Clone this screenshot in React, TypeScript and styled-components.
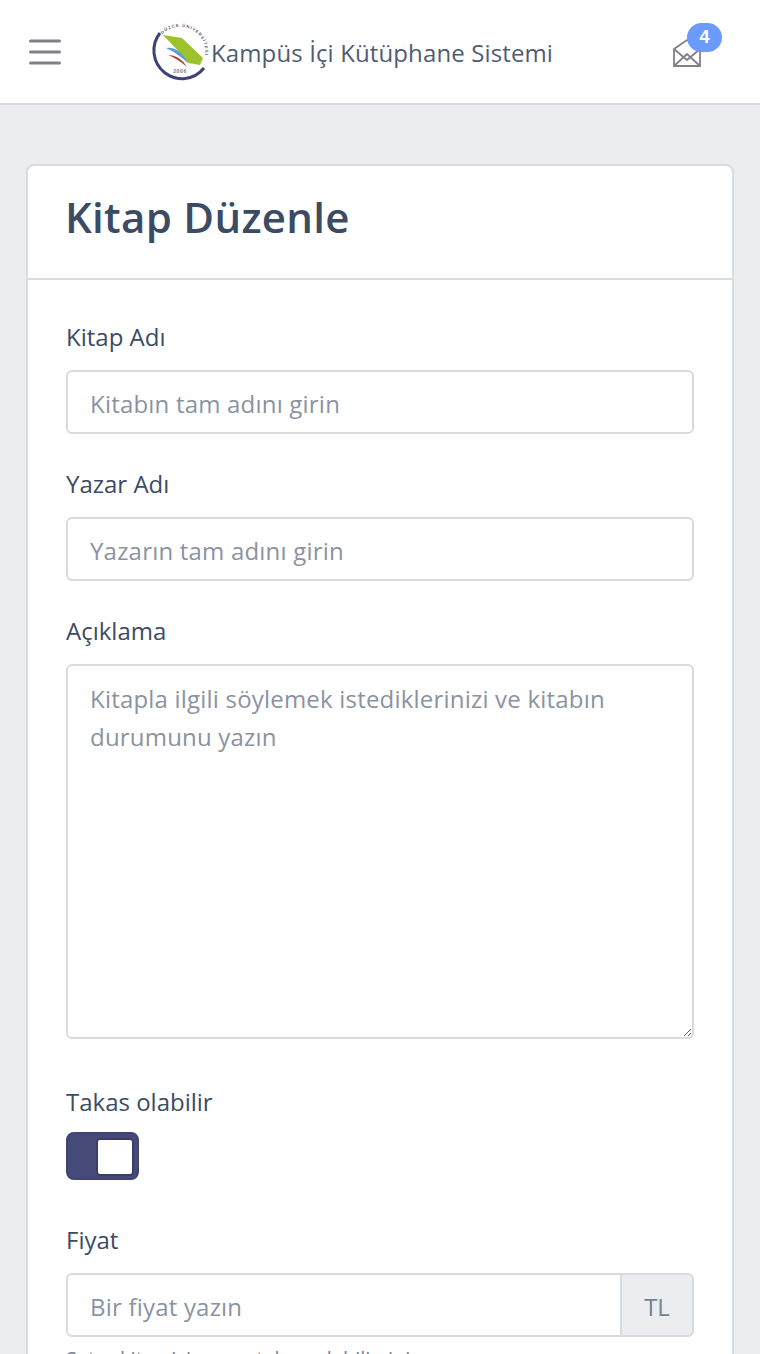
import { createGlobalStyle, styled } from "styled-components";

const GlobalStyle = createGlobalStyle`
    html, body{
        margin: 0;
        padding: 0;
        height: 1354px;
        overflow: hidden;
        background-color: #ebedef;
        font-family: 'Open Sans', 'Noto Sans', sans-serif;
        color: #3c4b64;
    }
    *{
        box-sizing: border-box;
    }
`

const Header = styled.header`
    height: 105px;
    background-color: #fff;
    border-bottom: 2px solid #d8dbe0;
    display: flex;
    align-items: center;
    padding: 0 58px 0 24px;
`

const MenuButton = styled.div`
    width: 42px;
    height: 42px;
    color: #80808a;
    display: flex;
    align-items: center;
    justify-content: center;
`

const Brand = styled.div`
    display: flex;
    align-items: center;
    margin-left: 84px;
    font-size: 24px;
    letter-spacing: 0.12px;
    color: #4f5d73;
`

const BrandName = styled.span`
    margin: 2px 0 0 1px;
`

const Mail = styled.div`
    position: relative;
    width: 30px;
    height: 30px;
    margin: 2px 0 0 auto;
    color: #80808a;
`

const Badge = styled.span`
    position: absolute;
    top: -15px;
    left: 15px;
    width: 35px;
    height: 29px;
    border-radius: 15px;
    background-color: #6b9bff;
    color: #fff;
    font-size: 18px;
    font-weight: 700;
    font-family: 'Liberation Sans', sans-serif;
    display: flex;
    align-items: center;
    justify-content: center;
`

const Main = styled.main`
    padding: 59px 26px 0;
`

const Card = styled.section`
    background-color: #fff;
    border: 2px solid #d8dbe0;
    border-radius: 8px;
`

const CardHeader = styled.div`
    height: 114px;
    padding: 0 37px;
    border-bottom: 2px solid #d8dbe0;
    display: flex;
    align-items: center;
`

const Title = styled.h1`
    margin: 0 0 10px;
    font-size: 42px;
    font-weight: 600;
    letter-spacing: 0.3px;
    line-height: 1.2;
    color: #3c4b64;
`

const CardBody = styled.div`
    padding: 40px 38px 0;
`

const Field = styled.div<{ $gap?: number }>`
    margin-bottom: ${({ $gap }) => $gap ?? 33}px;
`

const Label = styled.label`
    display: block;
    font-size: 24px;
    line-height: 34px;
    margin-bottom: 16px;
    color: #3c4b64;
`

const inputBase = `
    display: block;
    width: 100%;
    font-family: inherit;
    font-size: 24px;
    letter-spacing: 0.2px;
    color: #5c6873;
    background-color: #fff;
    border: 2px solid #d8dbe0;
    outline: none;
    &::placeholder{
        color: #8a93a2;
        opacity: 1;
    }
`

const Input = styled.input`
    ${inputBase}
    height: 64px;
    padding: 2px 22px 0;
    border-radius: 6px;
`

const TextArea = styled.textarea`
    ${inputBase}
    height: 375px;
    padding: 14px 22px;
    line-height: 38px;
    border-radius: 6px;
    resize: vertical;
`

const Toggle = styled.div`
    width: 73px;
    height: 48px;
    margin-top: -3px;
    background-color: #454a78;
    border: 2px solid #3f4470;
    border-radius: 8px;
    padding: 6px 0 0 30px;
`

const Knob = styled.div`
    width: 34px;
    height: 34px;
    background-color: #fff;
    border-radius: 2px;
    box-shadow: 0 0 0 2px #3a3e68;
`

const InputGroup = styled.div`
    display: flex;
    height: 64px;
`

const PriceInput = styled(Input)`
    flex: 1;
    border-radius: 6px 0 0 6px;
`

const Addon = styled.div`
    width: 74px;
    margin-left: -2px;
    padding-top: 2px;
    background-color: #ebedef;
    border: 2px solid #d8dbe0;
    border-radius: 0 6px 6px 0;
    font-size: 24px;
    color: #768192;
    display: flex;
    align-items: center;
    justify-content: center;
`

const Hint = styled.small`
    display: block;
    margin-top: 8px;
    font-size: 20px;
    color: #768192;
`

const HamburgerIcon = () => (
    <svg width="32" height="26" viewBox="0 0 32 26" fill="none" stroke="currentColor" strokeWidth="3" strokeLinecap="round">
        <path d="M1.5 2 H30.5 M1.5 13 H30.5 M1.5 24 H30.5" />
    </svg>
);

const Logo = () => (
    <svg width="60" height="60" viewBox="0 0 60 60">
        <path d="M10 11 A27 27 0 1 0 54 46" fill="none" stroke="#3f4274" strokeWidth="3" />
        <path d="M13 13 L32 16 L53 36 L50 43 L38 41 Q28 28 13 13Z" fill="#9cc22c" />
        <path d="M16 26 Q29 24 38 41 Q27 31 16 26Z" fill="#5b9bdc" />
        <path d="M18 33 Q30 33 37 45 Q28 37 18 33Z" fill="#b8432c" />
        <text x="30" y="51" textAnchor="middle" fontSize="5" fontWeight="700" letterSpacing="0.6" fill="#777" fontFamily="Liberation Sans">2006</text>
        <path id="logoArc" d="M12.3 12.3 A25 25 0 0 1 52.6 40.8" fill="none" />
        <text fontSize="4.2" fontWeight="700" fill="#5c6080" letterSpacing="1" fontFamily="Liberation Sans">
            <textPath href="#logoArc">DÜZCE ÜNİVERSİTESİ</textPath>
        </text>
    </svg>
);

const MailIcon = () => (
    <svg width="30" height="30" viewBox="0 0 30 30" fill="none" stroke="currentColor" strokeWidth="1.8">
        <path d="M2 11 L15 2 L28 11 V28 H2Z" />
        <path d="M2 11 L15 22 L28 11" />
        <path d="M2 28 L15 16 L28 28" />
    </svg>
);

export default function App(){
    return(
        <>
            <GlobalStyle />
            <Header>
                <MenuButton><HamburgerIcon /></MenuButton>
                <Brand>
                    <Logo />
                    <BrandName>Kampüs İçi Kütüphane Sistemi</BrandName>
                </Brand>
                <Mail>
                    <MailIcon />
                    <Badge>4</Badge>
                </Mail>
            </Header>
            <Main>
                <Card>
                    <CardHeader>
                        <Title>Kitap Düzenle</Title>
                    </CardHeader>
                    <CardBody>
                        <Field>
                            <Label>Kitap Adı</Label>
                            <Input placeholder="Kitabın tam adını girin" />
                        </Field>
                        <Field>
                            <Label>Yazar Adı</Label>
                            <Input placeholder="Yazarın tam adını girin" />
                        </Field>
                        <Field $gap={46}>
                            <Label>Açıklama</Label>
                            <TextArea placeholder="Kitapla ilgili söylemek istediklerinizi ve kitabın durumunu yazın" />
                        </Field>
                        <Field $gap={43}>
                            <Label>Takas olabilir</Label>
                            <Toggle><Knob /></Toggle>
                        </Field>
                        <Field>
                            <Label>Fiyat</Label>
                            <InputGroup>
                                <PriceInput placeholder="Bir fiyat yazın" />
                                <Addon>TL</Addon>
                            </InputGroup>
                            <Hint>Satıcı kitap için para talep edebilirsiniz</Hint>
                        </Field>
                    </CardBody>
                </Card>
            </Main>
        </>
    );
}
